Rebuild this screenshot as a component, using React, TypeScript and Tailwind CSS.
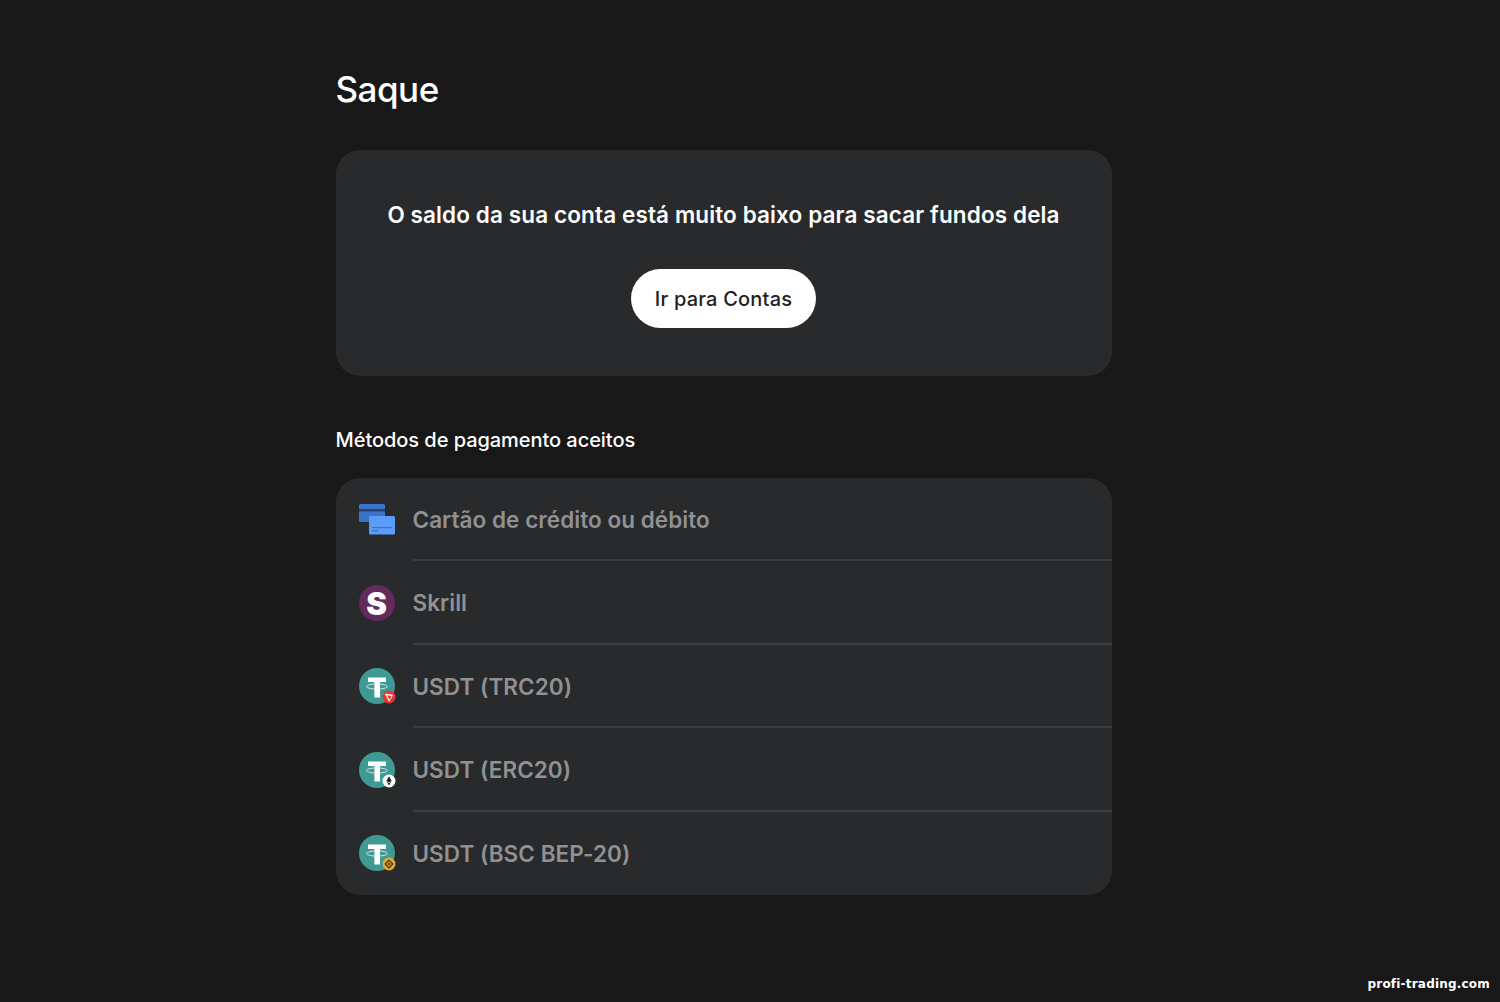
import React from "react";

function CardsIcon() {
  return (
    <svg width="36" height="31" viewBox="0 0 36 31">
      <rect x="0" y="0" width="26" height="18" rx="1.5" fill="#3a74c9" />
      <rect x="0" y="5" width="26" height="2.5" fill="#27406b" />
      <rect x="10" y="12" width="26" height="18.5" rx="1.5" fill="#5a9cf8" />
      <rect x="13" y="23" width="20" height="1.2" fill="#3a74c9" />
      <rect x="13" y="26" width="6" height="1.2" fill="#3a74c9" />
    </svg>
  );
}

function SkrillIcon() {
  return (
    <div className="flex h-9 w-9 items-center justify-center rounded-full bg-[#652a5c]">
      <span className="font-['Inter',sans-serif] text-[31px] leading-none font-black text-white">S</span>
    </div>
  );
}

function TetherIcon({ badge }: { badge: React.ReactNode }) {
  return (
    <svg width="36" height="36" viewBox="0 0 36 36" className="overflow-visible">
      <circle cx="18" cy="18" r="18" fill="#3f9a94" />
      <path d="M9 9.5h18v4.6h-6v15.4h-5.6V14.1H9z" fill="#fff" />
      <ellipse cx="18" cy="18.5" rx="10.5" ry="2.6" fill="none" stroke="#fff" strokeOpacity="0.8" strokeWidth="0.9" />
      {badge}
    </svg>
  );
}

const tronBadge = (
  <g>
    <circle cx="30" cy="29" r="6.5" fill="#e5372f" />
    <path d="M26.5 26l7 1.2-3.3 6zM27.5 26.8l2.7 5.6M33 27.5l-5.5-.7" fill="none" stroke="#fff" strokeWidth="0.9" />
  </g>
);

const ethBadge = (
  <g>
    <circle cx="30" cy="29" r="6.5" fill="#fff" />
    <path d="M30 24.3l2.7 4.6-2.7 1.6-2.7-1.6z" fill="#222" />
    <path d="M27.6 29.8l2.4 1.4 2.4-1.4-2.4 3.7z" fill="#222" />
  </g>
);

const bnbBadge = (
  <g>
    <circle cx="30" cy="29" r="6.5" fill="#e3ab2c" />
    <path d="M30 25.2l3.8 3.8-3.8 3.8-3.8-3.8z" fill="none" stroke="#3a2f10" strokeWidth="1.2" />
    <rect x="29" y="28" width="2" height="2" fill="#3a2f10" transform="rotate(45 30 29)" />
  </g>
);

const methods = [
  { name: "Cartão de crédito ou débito", icon: <CardsIcon /> },
  { name: "Skrill", icon: <SkrillIcon /> },
  { name: "USDT (TRC20)", icon: <TetherIcon badge={tronBadge} /> },
  { name: "USDT (ERC20)", icon: <TetherIcon badge={ethBadge} /> },
  { name: "USDT (BSC BEP-20)", icon: <TetherIcon badge={bnbBadge} /> },
];

export default function App() {
  return (
    <div className="relative flex h-[1002px] justify-center overflow-hidden bg-[#181818] pr-[53px] font-['Inter',sans-serif] text-white">
      <main className="w-[776px] pt-[68px]">
        <h1 className="text-[35px] leading-[42px] font-medium tracking-[-0.5px]">Saque</h1>

        <section className="mt-[40px] flex h-[226px] flex-col items-center rounded-3xl bg-[#292a2c] pt-[50px]">
          <p className="text-[22.5px] leading-[30px] font-semibold tracking-[0.12px]">
            O saldo da sua conta está muito baixo para sacar fundos dela
          </p>
          <button className="mt-[39px] h-[59px] w-[185px] rounded-full bg-white text-[20px] font-medium tracking-[0.2px] text-[#202124]">
            Ir para Contas
          </button>
        </section>

        <h2 className="mt-[50px] text-[20px] leading-[28px] font-medium tracking-[-0.05px]">
          Métodos de pagamento aceitos
        </h2>

        <ul className="mt-[24px] rounded-3xl bg-[#292a2c]">
          {methods.map((method, i) => (
            <li key={method.name} className="flex h-[83.4px] items-stretch pl-[23px]">
              <div className="flex w-[54px] shrink-0 items-center">{method.icon}</div>
              <div
                className={
                  i < methods.length - 1
                    ? "flex flex-1 items-center border-b-2 border-[#3c3d3f]"
                    : "flex flex-1 items-center"
                }
              >
                <span className="translate-y-px text-[22.5px] font-semibold tracking-[0.05px] text-[#909192]">
                  {method.name}
                </span>
              </div>
            </li>
          ))}
        </ul>
      </main>

      <span className="absolute right-[10px] bottom-[10px] font-['DejaVu_Sans',sans-serif] text-[12px] leading-4 font-bold tracking-[0.2px] text-white">
        profi-trading.com
      </span>
    </div>
  );
}
